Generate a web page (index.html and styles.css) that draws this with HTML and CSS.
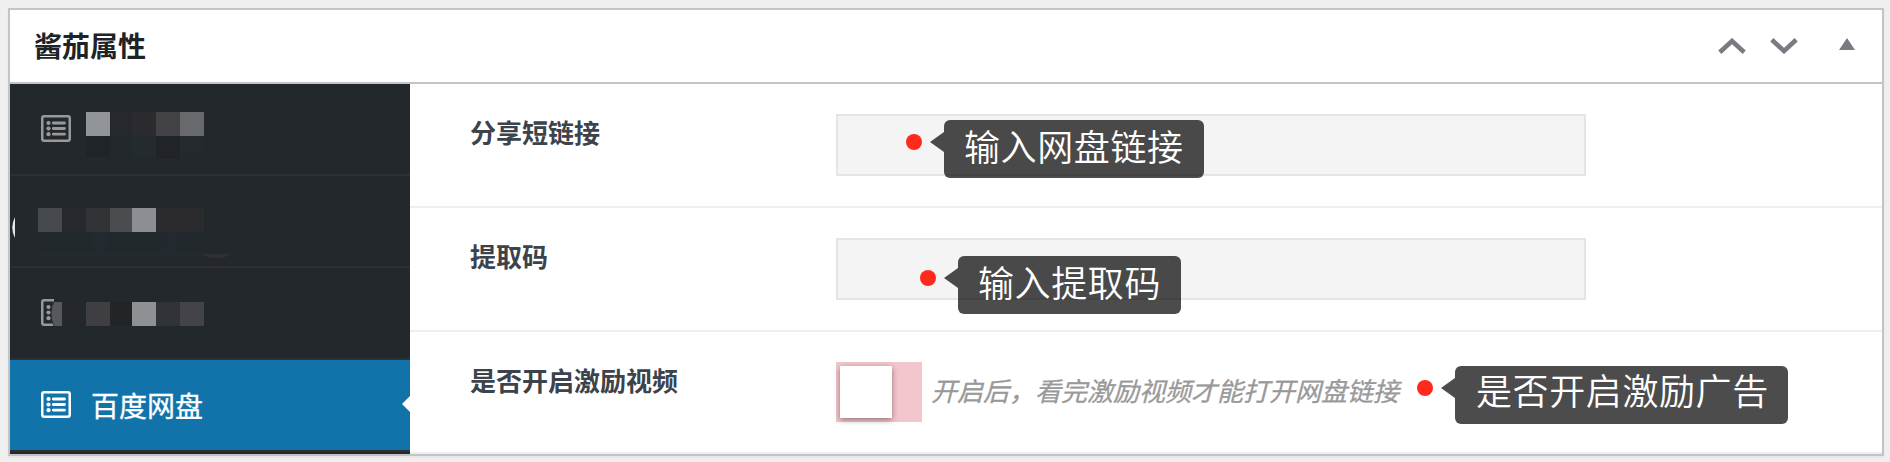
FILE: index.html
```html
<!DOCTYPE html>
<html lang="zh-CN">
<head>
<meta charset="UTF-8">
<meta name="viewport" content="width=device-width, initial-scale=1.0">
<title>酱茄属性</title>
<link rel="stylesheet" href="styles.css">
</head>
<body>

<svg class="defs" width="0" height="0">
    <symbol id="icon-list" viewBox="0 0 30 27">
        <rect x="1.25" y="1.25" width="27.5" height="24.5" rx="2" fill="none" stroke="currentColor" stroke-width="2.5"/>
        <circle cx="7.5" cy="8" r="2.1" fill="currentColor"/>
        <circle cx="7.5" cy="13.5" r="2.1" fill="currentColor"/>
        <circle cx="7.5" cy="19.2" r="2.1" fill="currentColor"/>
        <path d="M12.3 8h11.2M12.3 13.5h11.2M12.3 19.2h11.2" stroke="currentColor" stroke-width="2.8" stroke-linecap="round"/>
    </symbol>
</svg>

<div class="postbox">
    <div class="postbox-header">
        <h2>酱茄属性</h2>
        <div class="actions">
            <svg width="28" height="16" viewBox="0 0 28 16"><path d="M1.8 14.2L14 3 26.2 14.2" /></svg>
            <svg width="28" height="16" viewBox="0 0 28 16"><path d="M1.8 1.8L14 13 26.2 1.8" /></svg>
            <span class="toggle-arrow"></span>
        </div>
    </div>

    <div class="inside">
        <ul class="nav">
            <li>
                <svg class="icon" width="30" height="27"><use href="#icon-list"/></svg>
                <svg class="mosaic" width="118" height="90" shape-rendering="crispEdges">
                    <rect x="0" y="28" width="24" height="24" fill="#919499"/>
                    <rect x="24" y="28" width="22" height="24" fill="#25282c"/>
                    <rect x="46" y="28" width="24" height="24" fill="#2b2b2f"/>
                    <rect x="70" y="28" width="24" height="24" fill="#434347"/>
                    <rect x="94" y="28" width="24" height="24" fill="#68696c"/>
                    <rect x="0" y="52" width="24" height="21" fill="#202428"/>
                    <rect x="46" y="52" width="24" height="21" fill="#232b2d"/>
                    <rect x="70" y="52" width="24" height="23" fill="#202428"/>
                    <rect x="94" y="52" width="24" height="23" fill="#24292d"/>
                </svg>
            </li>
            <li class="plain">
                <svg class="mosaic" width="232" height="90">
                    <path d="M5 41Q-.5 51.5 5 62Z" fill="#e8e8e8"/>
                    <rect x="28" y="32" width="24" height="24" fill="#46494d"/>
                    <rect x="52" y="32" width="24" height="24" fill="#25282c"/>
                    <rect x="76" y="32" width="24" height="24" fill="#303437"/>
                    <rect x="100" y="32" width="22" height="24" fill="#4a4c50"/>
                    <rect x="122" y="32" width="24" height="24" fill="#8b8e92"/>
                    <rect x="146" y="32" width="48" height="24" fill="#2b2b2e"/>
                    <rect x="28" y="56" width="166" height="21" fill="#22292c"/>
                    <rect x="82" y="56" width="16" height="21" fill="#222930"/>
                    <rect x="152" y="56" width="16" height="21" fill="#222930"/>
                    <rect x="25" y="78" width="170" height="1" fill="#2c2b2e"/>
                    <path d="M191 78H222Q206 87 191 78Z" fill="#302e33"/>
                </svg>
            </li>
            <li>
                <svg class="icon" width="30" height="27"><use href="#icon-list"/></svg>
                <svg class="mosaic cover" width="153" height="90">
                    <path d="M3 30H35V60H3Q-3 45 3 34Z" fill="#24282c"/>
                    <path d="M3 34H11V58H3Q-2 46 3 34Z" fill="#55585d"/>
                    <rect x="35" y="34" width="24" height="24" fill="#3f3f43"/>
                    <rect x="59" y="34" width="22" height="24" fill="#212528"/>
                    <rect x="81" y="34" width="24" height="24" fill="#8d9194"/>
                    <rect x="105" y="34" width="24" height="24" fill="#303438"/>
                    <rect x="129" y="34" width="24" height="24" fill="#444448"/>
                </svg>
            </li>
            <li class="active">
                <svg class="icon" width="30" height="27"><use href="#icon-list"/></svg>
                <span>百度网盘</span>
            </li>
        </ul>

        <div class="content">
            <div class="field">
                <h4>分享短链接</h4>
                <div class="fieldset">
                    <input type="text">
                    <div class="tip tip-link"><i></i><span>输入网盘链接</span></div>
                </div>
            </div>
            <div class="field">
                <h4>提取码</h4>
                <div class="fieldset">
                    <input type="text">
                    <div class="tip tip-code"><i></i><span>输入提取码</span></div>
                </div>
            </div>
            <div class="field">
                <h4>是否开启激励视频</h4>
                <div class="fieldset">
                    <div class="switcher"><div class="ball"></div></div>
                    <span class="desc">开启后，看完激励视频才能打开网盘链接</span>
                    <div class="tip tip-video"><i></i><span>是否开启激励广告</span></div>
                </div>
            </div>
        </div>
    </div>
</div>

</body>
</html>
```

FILE: styles.css
```css
* {
    box-sizing: border-box;
}
body {
    margin: 0;
    padding: 8px 6px 6px 8px;
    height: 462px;
    overflow: hidden;
    background-color: #efefef;
    font-family: "Noto Sans CJK SC", sans-serif;
}
h2, h4, ul {
    margin: 0;
    padding: 0;
}
.defs {
    position: absolute;
}
.postbox {
    height: 448px;
    background-color: #fff;
    border: 2px solid #c3c4c9;
    box-shadow: 0 2px 2px rgba(0, 0, 0, 0.04);
}
.postbox-header {
    display: flex;
    align-items: center;
    justify-content: space-between;
    height: 74px;
    padding: 0 27px 0 24px;
    border-bottom: 2px solid #c3c4c9;
}
.postbox-header h2 {
    margin-top: -2px;
    font-size: 28px;
    line-height: 40px;
    color: #1d2327;
}
.actions {
    display: flex;
    align-items: center;
}
.actions svg {
    margin-right: 24px;
    fill: none;
    stroke: #787c82;
    stroke-width: 4.6;
}
.toggle-arrow {
    margin: -4px 0 0 17px;
    border: 8px solid transparent;
    border-top: 0;
    border-bottom: 12px solid #787c82;
}
.inside {
    display: flex;
    height: 370px;
}
.nav {
    width: 400px;
    background-color: #23282d;
    list-style: none;
}
.nav li {
    position: relative;
    display: flex;
    align-items: center;
    height: 92px;
    padding-left: 31px;
    border-bottom: 2px solid #2f2f2f;
    color: #999;
    font-size: 28px;
    line-height: 40px;
}
.nav .icon {
    margin-top: -1px;
}
.nav li.plain {
    padding-left: 0;
}
.nav .mosaic {
    margin-left: 15px;
}
.nav .plain .mosaic {
    margin-left: 0;
}
.nav .cover {
    margin-left: -20px;
}
.nav li.active {
    background-color: #1173aa;
    color: #fff;
}
.nav li.active span {
    margin: -1px 0 0 20px;
    -webkit-text-stroke: 0.3px #fff;
}
.nav li.active::after {
    content: "";
    position: absolute;
    right: 0;
    top: 36px;
    border: 8px solid transparent;
    border-left: 0;
    border-right-color: #fff;
}
.content {
    flex: 1;
}
.field {
    display: flex;
    padding: 30px 0 30px 60px;
    border-bottom: 2px solid #eee;
}
.field h4 {
    width: 366px;
    margin-top: -1px;
    font-size: 26px;
    line-height: 38px;
    color: #3c434a;
}
.fieldset {
    position: relative;
    display: flex;
    flex: 1;
    align-items: center;
}
.fieldset input {
    width: 750px;
    height: 62px;
    border: 2px solid #e5e5e5;
    background-color: #f4f4f4;
}
.switcher {
    width: 86px;
    height: 60px;
    padding: 4px;
    background-color: #f3c5cc;
}
.ball {
    width: 52px;
    height: 52px;
    background-color: #fff;
    box-shadow: 0 2px 6px rgba(0, 0, 0, 0.4);
}
.desc {
    margin: -5px 0 0 9px;
    font-size: 26px;
    line-height: 38px;
    font-style: italic;
    color: #999;
    -webkit-text-stroke: 0.3px #999;
}

/* red dot + callout over the fields */
.tip {
    position: absolute;
    display: flex;
}
.tip i {
    width: 16px;
    height: 16px;
    margin: 14px 22px 0 0;
    border-radius: 50%;
    background-color: #ff291c;
}
.tip span {
    position: relative;
    height: 58px;
    padding: 0 20px;
    border-radius: 6px;
    background-color: rgba(0, 0, 0, 0.7);
    color: #fff;
    font-size: 36px;
    font-weight: 350;
    line-height: 51px;
    letter-spacing: 0.6px;
    white-space: nowrap;
}
.tip span::before {
    content: "";
    position: absolute;
    left: -14px;
    top: 12px;
    border: 10px solid transparent;
    border-left: 0;
    border-right: 14px solid rgba(0, 0, 0, 0.7);
}
.tip-link {
    left: 70px;
    top: 6px;
}
.tip-code {
    left: 84px;
    top: 18px;
}
.tip-video {
    left: 581px;
    top: 3.5px;
}
.tip-video span {
    padding: 0 19px 0 21px;
    line-height: 47px;
}
```
